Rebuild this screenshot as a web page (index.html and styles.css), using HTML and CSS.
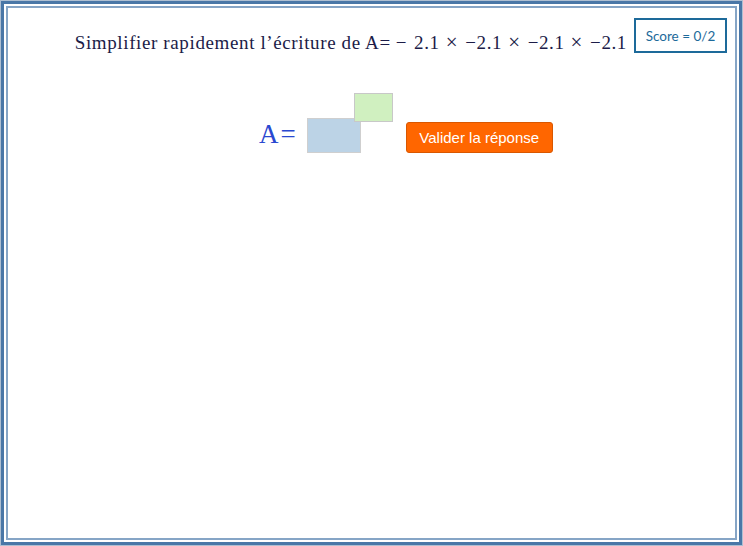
FILE: index.html
```html
<!DOCTYPE html>
<html lang="fr">
<head>
<meta charset="utf-8">
<link rel="stylesheet" href="styles.css">
</head>
<body>
<div class="page">
  <div class="outer">
    <div class="inner">
      <div class="header">
        <p class="question">Simplifier rapidement l’écriture de A=<span class="neg">−</span>2.1<span class="op">×</span>−2.1<span class="op">×</span>−2.1<span class="op">×</span>−2.1</p>
        <div class="score">Score = 0/2</div>
      </div>
      <div class="answer">
        <span class="lhs">A<span class="lhs-eq">=</span></span>
        <div class="boxes">
          <div class="box-main"></div>
          <div class="box-exp"></div>
        </div>
        <button class="validate">Valider la réponse</button>
      </div>
    </div>
  </div>
</div>
</body>
</html>
```
FILE: styles.css
```css
html, body {
  margin: 0;
  padding: 0;
  background: #fff;
}
.page {
  width: 743px;
  height: 546px;
  box-sizing: border-box;
  border: 1px solid #aebfd2;
}
.outer {
  height: 100%;
  box-sizing: border-box;
  border: 3px solid #4a77a7;
  padding: 2px;
}
.inner {
  height: 100%;
  box-sizing: border-box;
  border: 2px solid #86a5c6;
}
.header {
  display: flex;
  justify-content: flex-end;
  align-items: flex-start;
  padding: 10px 8px 0 0;
}
.question {
  margin: 13px 7px 0 0;
  font-family: "Liberation Serif", serif;
  font-size: 19px;
  line-height: 22px;
  letter-spacing: 0.62px;
  color: #1c1c48;
  white-space: nowrap;
}
.neg {
  margin: 0 7px 0 5px;
}
.op {
  display: inline-block;
  font-size: 21px;
  margin: 0 7px 0 6px;
}
.score {
  border: 2px solid #1d6a9a;
  color: #1d6a9a;
  font-family: "Lato", sans-serif;
  font-size: 13.5px;
  width: 89px;
  height: 31px;
  display: flex;
  align-items: center;
  justify-content: center;
}
.answer {
  display: flex;
  align-items: flex-end;
  padding-left: 251px;
  margin-top: 39px;
}
.lhs {
  font-family: "Liberation Serif", serif;
  font-size: 27px;
  color: #2a48d0;
  line-height: 27px;
  margin-bottom: 5px;
}
.lhs-eq {
  margin-left: 2px;
}
.boxes {
  position: relative;
  width: 88px;
  height: 60px;
  margin-left: 11px;
}
.box-main {
  position: absolute;
  left: 0;
  bottom: 0;
  width: 52px;
  height: 33px;
  background: #bcd3e6;
  border: 1px solid #cfcfcf;
}
.box-exp {
  position: absolute;
  left: 47px;
  top: 0;
  width: 37px;
  height: 27px;
  background: #d0f0c0;
  border: 1px solid #c8c8c8;
}
.validate {
  margin-left: 11px;
  width: 147px;
  height: 31px;
  background: #ff6600;
  border: 1px solid #d95700;
  border-radius: 3px;
  color: #fff;
  font-family: "Liberation Sans", sans-serif;
  font-size: 15px;
  padding: 0;
}
```
